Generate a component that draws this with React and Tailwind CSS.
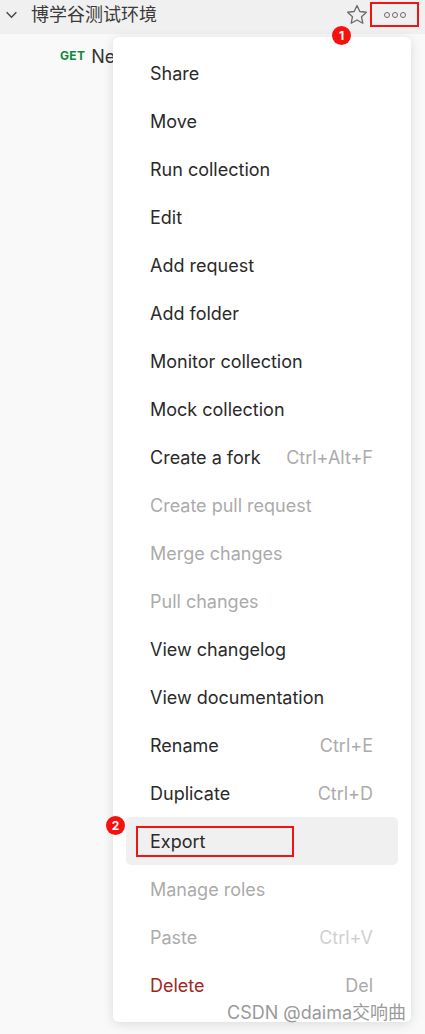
import React from 'react';

const items = [
  { label: 'Share' },
  { label: 'Move' },
  { label: 'Run collection' },
  { label: 'Edit' },
  { label: 'Add request' },
  { label: 'Add folder' },
  { label: 'Monitor collection' },
  { label: 'Mock collection' },
  { label: 'Create a fork', shortcut: 'Ctrl+Alt+F' },
  { label: 'Create pull request', disabled: true },
  { label: 'Merge changes', disabled: true },
  { label: 'Pull changes', disabled: true },
  { label: 'View changelog' },
  { label: 'View documentation' },
  { label: 'Rename', shortcut: 'Ctrl+E' },
  { label: 'Duplicate', shortcut: 'Ctrl+D' },
  { label: 'Export', active: true },
  { label: 'Manage roles', disabled: true },
  { label: 'Paste', shortcut: 'Ctrl+V', disabled: true },
  { label: 'Delete', shortcut: 'Del', danger: true },
];

const Badge = ({ n, className }) => (
  <div
    className={`absolute w-[19px] h-[19px] rounded-full bg-[#f5120e] text-white text-[12px] font-bold flex items-center justify-center ${className}`}
  >
    {n}
  </div>
);

const App = () => {
  return (
    <div
      className="relative w-[425px] h-[1034px] overflow-hidden bg-[#f9f9f9]"
      style={{ fontFamily: 'Inter, "Noto Sans CJK SC", sans-serif' }}
    >
      {/* Collection header */}
      <div className="flex items-center h-[34px] bg-[#f0f0f0] pl-[5px] pr-[6px] pb-[5px]">
        <svg width="13" height="13" viewBox="0 0 12 12" className="text-[#444]">
          <path d="M1.5 4 L6 8.5 L10.5 4" fill="none" stroke="currentColor" strokeWidth="1.3" />
        </svg>
        <span className="ml-[13px] text-[18px] text-[#3a3a3a] leading-none">博学谷测试环境</span>
        <div className="ml-auto flex items-center">
          <svg width="24" height="24" viewBox="0 0 24 24" className="text-[#6b6b6b]">
            <path
              d="M12 2.5l2.8 6 6.6.75-4.9 4.5 1.35 6.5L12 16.95 6.15 20.25l1.35-6.5-4.9-4.5 6.6-.75z"
              fill="none"
              stroke="currentColor"
              strokeWidth="1.3"
              strokeLinejoin="round"
            />
          </svg>
          <div className="ml-[1px] w-[49px] h-[25px] border-2 border-[#f01414] flex items-center justify-center gap-[2px]">
            <span className="w-[6px] h-[6px] rounded-full border-[1.5px] border-[#6b6b6b]" />
            <span className="w-[6px] h-[6px] rounded-full border-[1.5px] border-[#6b6b6b]" />
            <span className="w-[6px] h-[6px] rounded-full border-[1.5px] border-[#6b6b6b]" />
          </div>
        </div>
      </div>

      {/* Request row */}
      <div className="flex items-center h-[44px] pl-[60px]">
        <span className="text-[12px] font-bold text-[#0a8a3a] tracking-wide">GET</span>
        <span className="ml-[6px] text-[18px] text-[#333]">New Request</span>
      </div>

      <Badge n="1" className="left-[332px] top-[26px] z-20" />

      {/* Dropdown menu */}
      <div className="absolute left-[113px] top-[37px] w-[298px] h-[985px] bg-white rounded-[6px] shadow-[0_2px_12px_rgba(0,0,0,0.12)] px-[13px] pt-[12px] z-10">
        {items.map((it) => (
          <div
            key={it.label}
            className={`relative flex items-center justify-between h-[48px] pl-[24px] pr-[25px] rounded-[5px] text-[18px] ${
              it.active ? 'bg-[#f0f0f0]' : ''
            }`}
          >
            {it.active && (
              <div className="absolute left-[10px] top-[9px] w-[158px] h-[31px] border-2 border-[#f01414]" />
            )}
            <span
              className={
                it.danger ? 'text-[#a1261c]' : it.disabled ? 'text-[#ababab]' : 'text-[#2a2a2a]'
              }
            >
              {it.label}
            </span>
            {it.shortcut && (
              <span className={it.disabled ? 'text-[#d0d0d0]' : 'text-[#ababab]'}>{it.shortcut}</span>
            )}
          </div>
        ))}
      </div>

      <Badge n="2" className="left-[106px] top-[816px] z-20" />

      {/* Watermark */}
      <div className="absolute left-[227px] top-[1004px] text-[18px] text-[#9a9a9a] z-20 leading-none">
        CSDN @daima交响曲
      </div>
    </div>
  );
};

export default App;
